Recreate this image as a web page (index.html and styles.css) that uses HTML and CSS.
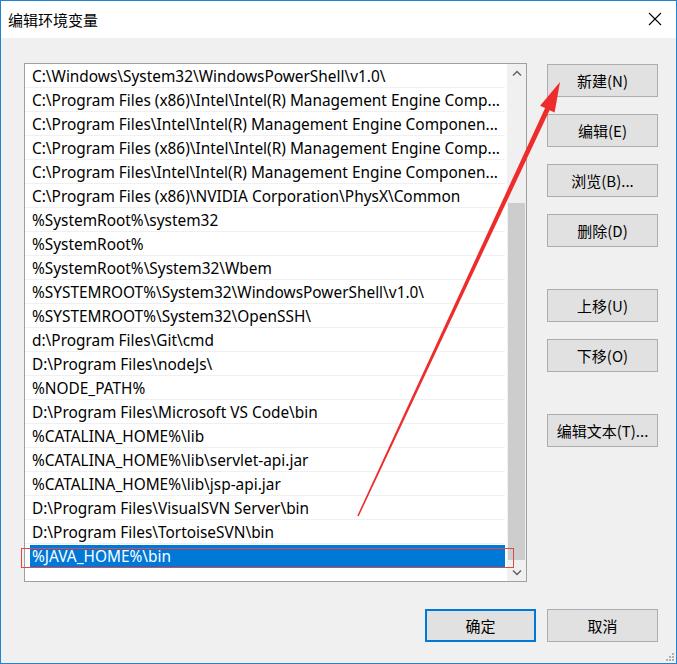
FILE: index.html
```html
<!DOCTYPE html>
<html>
<head>
<meta charset="utf-8">
<link rel="stylesheet" href="styles.css">
</head>
<body>
<div class="window">
  <div class="titlebar">
    <span class="title">编辑环境变量</span>
    <svg class="close" width="14" height="14" viewBox="0 0 14 14"><path d="M1 1 L13 13 M13 1 L1 13" stroke="#000" stroke-width="1.1" fill="none"/></svg>
  </div>
  <div class="content">
    <div class="main">
      <div class="listbox">
        <div class="items">
          <div class="item">C:\Windows\System32\WindowsPowerShell\v1.0\</div>
          <div class="item">C:\Program Files (x86)\Intel\Intel(R) Management Engine Comp...</div>
          <div class="item">C:\Program Files\Intel\Intel(R) Management Engine Componen...</div>
          <div class="item">C:\Program Files (x86)\Intel\Intel(R) Management Engine Comp...</div>
          <div class="item">C:\Program Files\Intel\Intel(R) Management Engine Componen...</div>
          <div class="item">C:\Program Files (x86)\NVIDIA Corporation\PhysX\Common</div>
          <div class="item">%SystemRoot%\system32</div>
          <div class="item">%SystemRoot%</div>
          <div class="item">%SystemRoot%\System32\Wbem</div>
          <div class="item">%SYSTEMROOT%\System32\WindowsPowerShell\v1.0\</div>
          <div class="item">%SYSTEMROOT%\System32\OpenSSH\</div>
          <div class="item">d:\Program Files\Git\cmd</div>
          <div class="item">D:\Program Files\nodeJs\</div>
          <div class="item">%NODE_PATH%</div>
          <div class="item">D:\Program Files\Microsoft VS Code\bin</div>
          <div class="item">%CATALINA_HOME%\lib</div>
          <div class="item">%CATALINA_HOME%\lib\servlet-api.jar</div>
          <div class="item">%CATALINA_HOME%\lib\jsp-api.jar</div>
          <div class="item">D:\Program Files\VisualSVN Server\bin</div>
          <div class="item">D:\Program Files\TortoiseSVN\bin</div>
          <div class="item selected"><span class="sel">%JAVA_HOME%\bin</span></div>
        </div>
        <div class="scrollbar">
          <div class="sb-btn"><svg width="10" height="6" viewBox="0 0 10 6"><path d="M1 5.5 L5 1.5 L9 5.5" stroke="#606060" stroke-width="1.4" fill="none"/></svg></div>
          <div class="sb-track"><div class="sb-thumb"></div></div>
          <div class="sb-btn"><svg width="10" height="6" viewBox="0 0 10 6"><path d="M1 0.5 L5 4.5 L9 0.5" stroke="#606060" stroke-width="1.4" fill="none"/></svg></div>
        </div>
      </div>
      <div class="side">
        <div class="group">
          <button class="btn">新建(N)</button>
          <button class="btn">编辑(E)</button>
          <button class="btn">浏览(B)...</button>
          <button class="btn">删除(D)</button>
        </div>
        <div class="group">
          <button class="btn">上移(U)</button>
          <button class="btn">下移(O)</button>
        </div>
        <div class="group">
          <button class="btn">编辑文本(T)...</button>
        </div>
      </div>
    </div>
    <div class="footer">
      <button class="btn default">确定</button>
      <button class="btn">取消</button>
    </div>
    <div class="grip">
      <i></i><i></i><i></i><i></i><i></i><i></i>
    </div>
  </div>
  <div class="redbox"></div>
  <svg class="arrow" width="677" height="664" viewBox="0 0 677 664">
    <polygon points="357.3,515.7 358.7,516.3 549.6,110.2 554.6,112.6 560,82 540.1,105.8 545.1,108.1" fill="#ee2c2c"/>
  </svg>
</div>
</body>
</html>
```

FILE: styles.css
```css
* { box-sizing: border-box; }
html, body { margin: 0; padding: 0; }
body {
  font-family: "Noto Sans", "Noto Sans CJK SC", sans-serif;
  font-size: 15px;
  color: #000;
  background: #f0f0f0;
}
.window {
  position: relative;
  width: 677px;
  height: 664px;
  border: 1px solid #1c84d6;
  background: #f0f0f0;
  overflow: hidden;
}
.titlebar {
  height: 37px;
  background: #fff;
  display: flex;
  align-items: center;
  justify-content: space-between;
  padding: 0 14px 0 7px;
}
.title {
  font-family: "Noto Sans CJK SC", sans-serif;
  font-size: 15px;
  line-height: 20px;
  margin-top: 1px;
}
.close { display: block; margin-top: -2px; }
.content {
  position: relative;
  height: 625px;
  padding: 25px 18px 0 23px;
}
.main {
  display: flex;
  gap: 20px;
}
.listbox {
  width: 503px;
  height: 519px;
  border: 1px solid #a0a0a0;
  background: #fff;
  display: flex;
}
.items {
  flex: 1;
  overflow: hidden;
  padding-right: 2px;
}
.item {
  height: 24px;
  line-height: 21px;
  padding-top: 2px;
  font-size: 15.4px;
  border-bottom: 1px solid #f0f0f0;
  padding-left: 7px;
  white-space: nowrap;
  overflow: hidden;
}
.item.selected {
  border-bottom: none;
  padding-left: 5px;
  padding-top: 1px;
}
.sel {
  display: block;
  background: #0078d7;
  color: #fff;
  height: 22px;
  line-height: 23px;
  padding-left: 2px;
}
.scrollbar {
  width: 19px;
  display: flex;
  flex-direction: column;
  background: #f0f0f0;
}
.sb-btn {
  height: 17px;
  display: flex;
  align-items: center;
  justify-content: center;
}
.sb-track {
  flex: 1;
  display: flex;
  flex-direction: column;
  justify-content: flex-end;
  padding: 0 1px 0 1px;
}
.sb-thumb {
  height: 357px;
  background: #cdcdcd;
  margin-bottom: 4px;
}
.side {
  display: flex;
  flex-direction: column;
  gap: 42px;
  padding-top: 1px;
}
.group {
  display: flex;
  flex-direction: column;
  gap: 17px;
}
.btn {
  width: 111px;
  height: 33px;
  background: #e1e1e1;
  border: 1px solid #adadad;
  font-family: "Noto Sans CJK SC", sans-serif;
  font-size: 15px;
  color: #000;
  padding: 0;
  margin: 0;
}
.btn.default {
  border: 2px solid #0078d7;
}
.footer {
  display: flex;
  justify-content: flex-end;
  gap: 11px;
  margin-top: 27px;
}
.grip {
  position: absolute;
  right: 2px;
  bottom: 2px;
  width: 9px;
  height: 9px;
}
.grip i {
  position: absolute;
  width: 2px;
  height: 2px;
  background: #b0b0b0;
}
.grip i:nth-child(1) { right: 0; bottom: 0; }
.grip i:nth-child(2) { right: 3px; bottom: 0; }
.grip i:nth-child(3) { right: 6px; bottom: 0; }
.grip i:nth-child(4) { right: 0; bottom: 3px; }
.grip i:nth-child(5) { right: 3px; bottom: 3px; }
.grip i:nth-child(6) { right: 0; bottom: 6px; }
.redbox {
  position: absolute;
  left: 20px;
  top: 547px;
  width: 493px;
  height: 20px;
  border: 1px solid #e04848;
}
.arrow {
  position: absolute;
  left: -1px;
  top: -1px;
  pointer-events: none;
}
```
